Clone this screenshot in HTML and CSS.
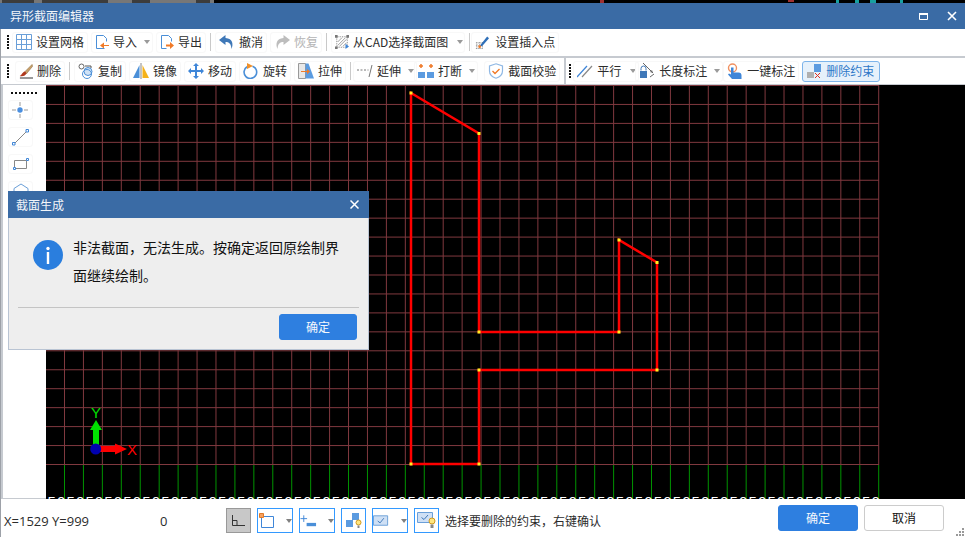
FILE: index.html
```html
<!DOCTYPE html>
<html lang="zh-CN">
<head>
<meta charset="utf-8">
<title>异形截面编辑器</title>
<link rel="stylesheet" href="styles.css">
</head>
<body>
<div class="backdrop">
  <svg width="965" height="3" viewBox="0 0 965 3"><path d="M0 0h2v3H0zM34 0h8v3h-8zM108 0h24v3h-24zM150 0h46v3h-46zM210 0h4v3h-4z" fill="#777"/><path d="M2 0h32v3H2zM42 0h66v3H42zM132 0h18v3h-18zM196 0h14v3h-14z" fill="#3c3c3c"/><path d="M600 0h4v3h-4zM788 0h6v2h-6z" fill="#a03030"/><path d="M836 0h3v3h-3zM855 0h4v3h-4zM870 0h6v3h-6zM900 0h3v3h-3z" fill="#18a0a0"/></svg>
</div>
<div class="window">
  <header class="titlebar">
    <span>异形截面编辑器</span>
    <div class="winbtns">
      <svg width="9" height="9" viewBox="0 0 9 9"><path d="M.5 1.500h8v6h-8z" fill="none" stroke="#fff"/><path d="M0 1h9v2H0z" fill="#fff"/></svg>
      <svg width="10" height="10" viewBox="0 0 10 10"><path d="M1 1l8 8M9 1l-8 8" stroke="#fff" stroke-width="1.600"/></svg>
    </div>
  </header>

  <div class="toolbar first">
    <i class="grip"></i>
    <div class="tool">
      <svg class="ic" viewBox="0 0 16 16"><path d="M.5.500h15v15H.5zM5.500.500v15M10.500.500v15M.5 5.500h15M.5 10.500h15" fill="none" stroke="#6a9fd8"/></svg>设置网格
    </div>
    <div class="tool caretted">
      <svg class="ic sm" viewBox="0 0 14 16"><path d="M1.500 1.500h7l3 3v3M1.500 1.500v13h8" fill="none" stroke="#4a8fd8"/><path d="M14 11H9V8.500L5 11.500 9 14.500V12h5z" fill="#f07a28"/></svg>导入<i class="caret"></i>
    </div>
    <div class="tool">
      <svg class="ic sm" viewBox="0 0 14 16"><path d="M1.500 1.500h7l3 3v3M1.500 1.500v13h5" fill="none" stroke="#4a8fd8"/><path d="M6 10.500h4V8l4 3.500-4 3.500v-2.500H6z" fill="#f07a28"/></svg>导出
    </div>
    <i class="sep"></i>
    <div class="tool">
      <svg class="ic" viewBox="0 0 16 16"><path d="M6.500 1L0 6l6.500 5V8c3.500 0 5.500 1.500 6 7 2-4.500 1.500-10.500-6-11z" fill="#3f78b8"/></svg>撤消
    </div>
    <div class="tool off">
      <svg class="ic" viewBox="0 0 16 16"><path d="M9.500 1L16 6l-6.500 5V8c-3.500 0-5.500 1.500-6 7-2-4.500-1.500-10.500 6-11z" fill="#bdbdbd"/></svg>恢复
    </div>
    <i class="sep"></i>
    <div class="tool caretted cad">
      <svg class="ic sm" viewBox="0 0 16 16"><path d="M2 2h12v12H2z" fill="#fff" stroke="#777" stroke-dasharray="1 1"/><path d="M3 8l5-5M3 12l9-9M5 13l8-8M9 13l4-4" stroke="#888" stroke-width=".9"/><path d="M0 0h3v3H0zM13 0h3v3h-3zM0 13h3v3H0z" fill="#777"/><path d="M12 10l4 3-4 3z" fill="#3f86d8"/></svg>从CAD选择截面图<i class="caret"></i>
    </div>
    <i class="sep"></i>
    <div class="tool ins">
      <svg class="ic sm" viewBox="0 0 15 16"><path d="M1 9h8M1 12h8M1 15h8M2 8v8M5 8v8M8 8v8" stroke="#888" stroke-dasharray="1 1"/><path d="M6 11L13 2l2 2-7 8-3 1z" fill="#2f6fb8"/><circle cx="5" cy="13" r="1.500" fill="#f07a28"/></svg>设置插入点
    </div>
  </div>

  <div class="toolbar second">
    <i class="grip"></i>
    <div class="tool del">
      <svg class="ic sm" viewBox="0 0 15 16"><path d="M14 1L6 9l2 2 6.500-8z" fill="#c9a06a" stroke="#8a6a3a" stroke-width=".6"/><path d="M1 13c2-.5 2.500-4 5.500-4.500L8 10.500c-1 2.500-3 3.500-7 3z" fill="#b0391e"/><path d="M1 15.500h14" stroke="#222"/></svg>删除
    </div>
    <i class="sep"></i>
    <div class="tool">
      <svg class="ic" viewBox="0 0 16 16"><circle cx="3.500" cy="3.500" r="2.500" fill="#fff" stroke="#666"/><circle cx="10" cy="8.500" r="4" fill="#cfe2f6" stroke="#4a8fd8"/><circle cx="9" cy="11" r="4.500" fill="none" stroke="#4a8fd8"/><path d="M7 3h6v2" fill="none" stroke="#555"/></svg>复制
    </div>
    <div class="tool">
      <svg class="ic" viewBox="0 0 16 16"><path d="M6.500 2v13H0z" fill="#4a8fd8"/><path d="M9.500 2v13H16z" fill="#f5b21a"/><path d="M8 0v16" stroke="#888"/></svg>镜像
    </div>
    <div class="tool">
      <svg class="ic" viewBox="0 0 16 16"><path d="M8 0l3 3H9v4h4V5l3 3-3 3V9H9v4h2l-3 3-3-3h2V9H3v2L0 8l3-3v2h4V3H5z" fill="#3f86d8"/></svg>移动
    </div>
    <div class="tool">
      <svg class="ic" viewBox="0 0 16 16"><path d="M9.500 3.200A6.300 6.300 0 1 1 4 3.800" fill="none" stroke="#4a8fd8" stroke-width="1.600"/><path d="M4 0l6 3-6 3z" fill="#f0902a"/></svg>旋转
    </div>
    <div class="tool">
      <svg class="ic" viewBox="0 0 16 16"><path d="M.5 .5h7v15h-7z" fill="#e8e8e8" stroke="#999"/><path d="M7.500 .5h3L16 15.500H7.500z" fill="#5b9be0"/><path d="M3 8h6V6l3 2.500L9 11V9H3z" fill="#f07a28"/></svg>拉伸
    </div>
    <i class="sep"></i>
    <div class="tool caretted extend">
      <svg class="ic" viewBox="0 0 16 16"><path d="M0 7h2M3.500 7h2M7 7h2M10.500 7h1" stroke="#777"/><path d="M12 14L15 2" stroke="#777"/></svg>延伸<i class="caret"></i>
    </div>
    <div class="tool caretted breaker">
      <svg class="ic" viewBox="0 0 16 16"><path d="M0 9h7v6H0zM9 9h7v6H9z" fill="#5b9be0"/><path d="M1 3h4M3 1v4M11 3h4M13 1v4" stroke="#f07a28" stroke-width="1.500"/></svg>打断<i class="caret"></i>
    </div>
    <div class="tool check">
      <svg class="ic" viewBox="0 0 16 16"><path d="M8 .8l6.500 2.200v5c0 3.500-3 6-6.500 7.200C4.500 14 1.500 11.500 1.500 8V3z" fill="#fff" stroke="#8fb8e4" stroke-width="1.200"/><path d="M4.500 8l2.500 2.500L11.500 6" fill="none" stroke="#f07a28" stroke-width="1.400"/></svg>截面校验
    </div>
    <i class="divider"></i>
    <i class="grip"></i>
    <div class="tool caretted parallel">
      <svg class="ic" viewBox="0 0 16 16"><path d="M0 14L10 3" stroke="#3f86d8" stroke-width="1.200"/><path d="M5 14L15 3" stroke="#888" stroke-width="1.200"/></svg>平行<i class="caret"></i>
    </div>
    <div class="tool caretted length">
      <svg class="ic" viewBox="0 0 16 16"><path d="M2 7.500V5.500a2.500 2.500 0 0 1 5 0v2" fill="none" stroke="#3f78b8"/><path d="M1 8h7v7H1z" fill="#3f78b8"/><path d="M4 0l10 10M11 14l4-3" stroke="#666"/><path d="M14 10l-3-1 2-2z" fill="#666"/></svg>长度标注<i class="caret"></i>
    </div>
    <div class="tool oneclick">
      <svg class="ic" viewBox="0 0 16 16"><circle cx="5.500" cy="5" r="4" fill="none" stroke="#f09060" stroke-width="1.400"/><path d="M4 4.500h2.500v5h5c2 0 3 1 3 3V16H5L1 11.500l1-1L4 11.500z" fill="#3f86d8"/></svg>一键标注
    </div>
    <div class="tool active">
      <svg class="ic" viewBox="0 0 16 16"><path d="M1 9h7v6H1z" fill="#b0b0b0"/><path d="M8 1h7v8H8z" fill="#5b9be0"/><path d="M9 10l5 5M14 10l-5 5" stroke="#e03020"/></svg>删除约束
    </div>
  </div>

  <main class="work">
    <aside class="palette">
      <i class="dots"></i>
      <div class="pal">
        <svg class="pointer" width="16" height="16" viewBox="0 0 16 16"><path d="M8 0v4M8 12v4M0 8h4M12 8h4" stroke="#999"/><circle cx="8" cy="8" r="2.700" fill="#4a8fe0"/></svg>
      </div>
      <div class="pal">
        <svg width="17" height="17" viewBox="0 0 17 17"><path d="M2 15L15 2" stroke="#888"/><path d="M.5 13.500h2.500v2.500H.5zM14 .5h2.500V3H14z" fill="#fff" stroke="#3f86d8"/></svg>
      </div>
      <div class="pal">
        <svg width="16" height="12" viewBox="0 0 16 12"><path d="M1.500 2.500h12v8h-12z" fill="none" stroke="#888"/><path d="M.5 9.500h2v2h-2zM13.500 .5h2v2h-2z" fill="#fff" stroke="#3f86d8"/></svg>
      </div>
      <div class="pal">
        <svg width="16" height="16" viewBox="0 0 16 16"><path d="M8 1l7 4.500v10H1v-10z" fill="none" stroke="#6a9fd8"/></svg>
      </div>
    </aside>

    <section class="canvas">
      <svg class="drawing" width="919" height="414" viewBox="46 85 919 414">
        <path class="gridline" d="M46 85.500H879M46 104.450H879M46 123.400H879M46 142.350H879M46 161.300H879M46 180.250H879M46 199.200H879M46 218.150H879M46 237.100H879M46 256.050H879M46 275H879M46 293.950H879M46 312.900H879M46 331.850H879M46 350.800H879M46 369.750H879M46 388.700H879M46 407.650H879M46 426.600H879M46 445.550H879M46 464.500H879"/>
        <path class="gridline" d="M64.500 85V465M83.440 85V465M102.370 85V465M121.310 85V465M140.240 85V465M159.180 85V465M178.110 85V465M197.050 85V465M215.980 85V465M234.920 85V465M253.850 85V465M272.790 85V465M291.720 85V465M310.660 85V465M329.590 85V465M348.530 85V465M367.460 85V465M386.400 85V465M405.330 85V465M424.270 85V465M443.200 85V465M462.140 85V465M481.070 85V465M500.010 85V465M518.940 85V465M537.880 85V465M556.810 85V465M575.750 85V465M594.680 85V465M613.620 85V465M632.550 85V465M651.490 85V465M670.420 85V465M689.360 85V465M708.290 85V465M727.230 85V465M746.160 85V465M765.100 85V465M784.030 85V465M802.970 85V465M821.900 85V465M840.840 85V465M859.770 85V465M878.710 85V465"/>
        <path class="ticks" d="M64.500 465V499M83.440 465V499M102.370 465V499M121.310 465V499M140.240 465V499M159.180 465V499M178.110 465V499M197.050 465V499M215.980 465V499M234.920 465V499M253.850 465V499M272.790 465V499M291.720 465V499M310.660 465V499M329.590 465V499M348.530 465V499M367.460 465V499M386.400 465V499M405.330 465V499M424.270 465V499M443.200 465V499M462.140 465V499M481.070 465V499M500.010 465V499M518.940 465V499M537.880 465V499M556.810 465V499M575.750 465V499M594.680 465V499M613.620 465V499M632.550 465V499M651.490 465V499M670.420 465V499M689.360 465V499M708.290 465V499M727.230 465V499M746.160 465V499M765.100 465V499M784.030 465V499M802.970 465V499M821.900 465V499M840.840 465V499M859.770 465V499M878.710 465V499"/>
        <text class="ruler" x="47.500" y="507">5050505050505050505050505050505050505050505050505050505050505050505050505050505050505050</text>
        <path class="shape" d="M411 93L479 133.500V332H619V240L657 262.500V370H479V464H411z"/>
        <path class="verts" d="M409.500 91.500h3v3h-3zM477.500 132h3v3h-3zM477.500 330.500h3v3h-3zM617.500 238.500h3v3h-3zM655.500 261h3v3h-3zM617.500 330.500h3v3h-3zM655.500 368.500h3v3h-3zM477.500 368.500h3v3h-3zM477.500 462.500h3v3h-3zM409.500 462.500h3v3h-3z"/>
        <path d="M93 449V430h-3l6-10 6 10h-3v19z" fill="#00e000"/>
        <path d="M100 446h15v-2.500l12 5.500-12 5.500V452h-15z" fill="#ff0000"/>
        <circle cx="95.700" cy="449" r="5.500" fill="#0000b0"/>
        <text class="axis y" x="91" y="418">Y</text>
        <text class="axis x" x="127" y="455">X</text>
      </svg>
    </section>
  </main>

  <footer class="status">
    <span class="coord">X=1529 Y=999</span>
    <span class="zero">0</span>
    <div class="snap toggle">
      <svg width="13" height="11" viewBox="0 0 13 11"><path d="M.5 0v10.500H13M.5 5.500H5v5" fill="none" stroke="#333"/></svg>
    </div>
    <div class="snap wide">
      <svg width="16" height="16" viewBox="0 0 16 16"><path d="M2.500 3.500h12v11h-12z" fill="#fff" stroke="#3f86d8"/><path d="M.5 .5h4v4h-4z" fill="#f5a060" stroke="#e07a28"/></svg><i class="caret"></i>
    </div>
    <div class="snap wide">
      <svg width="18" height="16" viewBox="0 0 18 16"><path d="M4 2v7M.5 5.500h7" stroke="#3f86d8"/><path d="M7 10h10v3.500H7z" fill="#4a8fd8"/></svg><i class="caret"></i>
    </div>
    <div class="snap">
      <svg width="17" height="17" viewBox="0 0 17 17"><path d="M1 8h7v7H1z" fill="#5b9be0"/><path d="M7 1h7v7H7z" fill="#5b9be0"/><circle cx="13.500" cy="10.500" r="2.500" fill="#ffe680" stroke="#d09a20"/><path d="M12.500 13.500h2V16h-2z" fill="#888"/></svg>
    </div>
    <div class="snap wide">
      <svg width="18" height="12" viewBox="0 0 18 12"><path d="M.5 .5h15v10H.5z" fill="#cfe0f5" stroke="#6a9fd8"/><path d="M5 6l2.500 2L11.500 3" fill="none" stroke="#3f78b8"/></svg><i class="caret"></i>
    </div>
    <div class="snap">
      <svg width="19" height="17" viewBox="0 0 19 17"><path d="M.5 .5h15v10H.5z" fill="#cfe0f5" stroke="#6a9fd8"/><path d="M4.500 5.500l2.500 2L11 3" fill="none" stroke="#3f78b8"/><circle cx="15" cy="9" r="3" fill="#ffe680" stroke="#d09a20"/><path d="M13.500 12.500h3V16h-3z" fill="#888"/></svg>
    </div>
    <span class="hint">选择要删除的约束，右键确认</span>
    <div class="actions">
      <button class="btn primary">确定</button>
      <button class="btn plain">取消</button>
    </div>
    <svg class="resize" width="8" height="8" viewBox="0 0 8 8"><path d="M6 0h2v2H6zM3 3h2v2H3zM6 3h2v2H6zM0 6h2v2H0zM3 6h2v2H3zM6 6h2v2H6z" fill="#999"/></svg>
  </footer>

  <div class="dialog">
    <div class="dlg-title">
      <span>截面生成</span>
      <svg width="9" height="9" viewBox="0 0 9 9"><path d="M.5.500l8 8M8.500.500l-8 8" stroke="#fff" stroke-width="1.500"/></svg>
    </div>
    <div class="dlg-body">
      <svg class="info" width="30" height="30" viewBox="0 0 30 30"><circle cx="15" cy="15" r="15" fill="#2a7ede"/><circle cx="15" cy="8.500" r="1.700" fill="#fff"/><path d="M13.800 12h2.400v12h-2.400z" fill="#fff"/></svg>
      <p>非法截面，无法生成。按确定返回原绘制界面继续绘制。</p>
    </div>
    <div class="dlg-foot">
      <button class="btn primary small">确定</button>
    </div>
  </div>
</div>
</body>
</html>
```
FILE: styles.css
```css
* { box-sizing: border-box; }
html, body { margin: 0; padding: 0; }
body {
  width: 965px;
  height: 537px;
  overflow: hidden;
  background: #000;
  font-family: "Noto Sans CJK SC", "Noto Sans", sans-serif;
  font-size: 12px;
  color: #2c2c2c;
}
.backdrop { height: 3px; overflow: hidden; }
.backdrop svg { display: block; }
.window {
  position: relative;
  height: 534px;
  display: flex;
  flex-direction: column;
  border-left: 1px solid #9da1a8;
  background: #fff;
}
.titlebar {
  flex: 0 0 26px;
  display: flex;
  align-items: center;
  justify-content: space-between;
  padding: 0 8px 0 10px;
  margin-left: -1px;
  background: #3a6ba5;
  color: #f2f5f9;
  line-height: 26px;
}
.winbtns { display: flex; align-items: center; gap: 19px; }
.winbtns svg { display: block; }

.toolbar {
  display: flex;
  align-items: center;
  gap: 3px;
  background: #fff;
  padding-left: 6px;
  border-bottom: 2px solid #c6cad0;
}
.toolbar.first { flex: 0 0 29px; padding-bottom: 1px; }
.toolbar.second { flex: 0 0 27px; border-bottom-width: 1px; }
.grip {
  flex: none;
  width: 2px;
  height: 14px;
  background: repeating-linear-gradient(#111 0 2px, transparent 2px 3px);
}
.tool {
  flex: none;
  display: flex;
  align-items: center;
  gap: 4px;
  height: 21px;
  padding: 0 3px;
  border: 1px solid #f8f8f8;
  border-radius: 3px;
  white-space: nowrap;
  line-height: 1;
}
.tool.caretted { padding-right: 2px; }
.tool.off { color: #b4b4b4; }
.tool.cad { padding-right: 1px; }
.tool.cad .caret { margin-left: 5px; }
.tool.ins { margin-left: -3px; gap: 6px; }
.tool.del { margin-left: 3px; }
.tool.extend { margin-left: -2px; }
.tool.breaker { margin-left: -6px; }
.tool.check { margin-left: 3px; }
.tool.parallel { margin-left: -1px; }
.tool.parallel .caret { margin-left: 5px; }
.tool.length { margin-left: -7px; }
.tool.oneclick { margin-left: -3px; }
.tool.active {
  padding: 0 5px 0 3px;
  background: #e6f1fb;
  border-color: #7db4ea;
  color: #2f78c8;
}
.ic { flex: none; display: block; width: 16px; height: 16px; }
.ic.sm { width: 14px; }
.caret {
  flex: none;
  width: 0;
  height: 0;
  margin-left: 3px;
  border-left: 3px solid transparent;
  border-right: 3px solid transparent;
  border-top: 4px solid #9a9a9a;
}
.sep {
  flex: none;
  width: 1px;
  height: 18px;
  margin: 0 1px;
  background: #c9c9c9;
}
.divider {
  flex: none;
  width: 2px;
  height: 100%;
  margin-left: 1px;
  background: #c6cad0;
}

.work { flex: 1; min-height: 0; display: flex; }
.palette {
  flex: 0 0 45px;
  display: flex;
  flex-direction: column;
  align-items: flex-start;
  padding: 7px 0 0 5px;
  gap: 7px;
  border-left: 2px solid #c6cad0;
  border-bottom: 1px solid #c6cad0;
  overflow: hidden;
}
.dots {
  display: block;
  flex: none;
  width: 26px;
  height: 2px;
  margin: 0 0 -1px 3px;
  background: repeating-linear-gradient(90deg, #111 0 2px, transparent 2px 4px);
}
.pal {
  flex: none;
  width: 25px;
  height: 20px;
  display: flex;
  align-items: center;
  justify-content: center;
  border: 1px solid #f8f8f8;
  border-radius: 3px;
}
.pal svg { display: block; }
.pal .pointer { margin: -1px 2px 0 0; }
.canvas { flex: 1; min-width: 0; background: #000; overflow: hidden; }
.drawing { display: block; }
.gridline { fill: none; stroke: #80393f; stroke-width: 1; }
.ticks { fill: none; stroke: #009400; stroke-width: 1; }
.ruler {
  font-family: "Liberation Sans", sans-serif;
  font-size: 15px;
  letter-spacing: 1.13px;
  fill: #fff;
}
.shape { fill: none; stroke: #ff0000; stroke-width: 2.500; stroke-linejoin: miter; }
.verts { fill: #ffee22; }
.axis { font-family: "Liberation Sans", sans-serif; font-size: 15px; }
.axis.y { fill: #00e000; }
.axis.x { fill: #ff0000; }

.status {
  position: relative;
  flex: 0 0 38px;
  display: flex;
  align-items: flex-start;
  background: #fff;
  font-size: 12px;
}
.coord { flex: 0 0 159px; padding: 13px 0 0 3px; line-height: 18px; font-family: "Open Sans", sans-serif; font-size: 13px; }
.zero { flex: 0 0 66px; padding-top: 13px; line-height: 18px; font-family: "Open Sans", sans-serif; font-size: 13px; }
.snap {
  flex: none;
  display: flex;
  align-items: center;
  justify-content: center;
  gap: 8px;
  width: 25px;
  height: 25px;
  margin: 9px 6px 0 0;
  border: 1px solid #3399ff;
  background: #fff;
}
.snap svg { display: block; }
.snap .caret { border-top-color: #808080; }
.snap.wide { width: 36px; }
.snap.toggle { background: #c8c8c8; border-color: #999; }
.hint { padding-top: 13px; line-height: 18px; }
.actions { margin-left: auto; margin-right: 21px; padding-top: 6px; display: flex; gap: 6px; }
.btn {
  width: 80px;
  height: 26px;
  padding: 0;
  border: 1px solid #ccc;
  border-radius: 3px;
  font: inherit;
  line-height: 1;
  background: #fff;
  color: #111;
}
.btn.primary { background: #2e7fe0; border-color: #2e7fe0; color: #f4f8fd; }
.btn.small { width: 78px; }
.resize { position: absolute; right: 1px; bottom: 1px; }

.dialog {
  position: absolute;
  left: 7px;
  top: 188px;
  width: 361px;
  height: 159px;
  display: flex;
  flex-direction: column;
  background: #eeeeee;
  border: 1px solid #b9c4d3;
  border-top: 0;
}
.dlg-title {
  flex: 0 0 27px;
  margin: 0 -1px;
  padding: 0 10px 0 8px;
  display: flex;
  align-items: center;
  justify-content: space-between;
  background: #3a6ba5;
  color: #f2f5f9;
}
.dlg-body {
  flex: 1;
  display: flex;
  align-items: flex-start;
  gap: 10px;
  padding: 22px 20px 0 24px;
}
.dlg-body .info { flex: none; display: block; }
.dlg-body p {
  margin: -7px 0 0;
  width: 270px;
  color: #111;
  font-size: 14px;
  line-height: 28px;
}
.dlg-foot {
  flex: 0 0 42px;
  margin: 0 9px;
  padding: 6px 2px 0 0;
  display: flex;
  justify-content: flex-end;
  border-top: 1px solid #c4c4c4;
}
```
